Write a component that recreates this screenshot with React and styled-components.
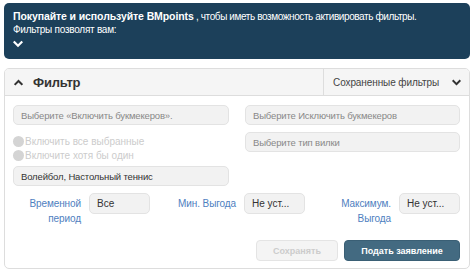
import React from 'react'
import styled, { createGlobalStyle } from 'styled-components'

const GlobalStyle = createGlobalStyle`
  body {
    margin: 0;
    background: #fff;
    font-family: "Liberation Sans", Arial, sans-serif;
    color: #333;
  }
`;

const Chevron = ({ up, size = 9, color = '#333' }) => (
  <svg width={size} height={size} viewBox="0 0 10 10">
    <path
      d={up ? 'M1.5 6.8 L5 3.3 L8.5 6.8' : 'M1.5 3.3 L5 6.8 L8.5 3.3'}
      fill="none"
      stroke={color}
      strokeWidth="2.2"
      strokeLinecap="square"
    />
  </svg>
)

const App = () => {
  return (
    <Page>
      <GlobalStyle />
      <Banner>
        <BannerLine>
          <b>Покупайте и используйте BMpoints</b>
          <Tight> , чтобы иметь возможность активировать фильтры.</Tight>
        </BannerLine>
        <BannerLine>Фильтры позволят вам:</BannerLine>
        <BannerToggle><Chevron size={10} color="#fff" /></BannerToggle>
      </Banner>

      <Panel>
        <Header>
          <HeaderTitle>
            <Chevron up size={9} />
            <span>Фильтр</span>
          </HeaderTitle>
          <SavedFilters>
            <span>Сохраненные фильтры</span>
            <Chevron size={9} />
          </SavedFilters>
        </Header>

        <Body>
          <Columns>
            <Column>
              <Field>Выберите «Включить букмекеров».</Field>
              <Radios>
                <Radio><Dot />Включить все выбранные</Radio>
                <Radio><Dot />Включите хотя бы один</Radio>
              </Radios>
              <Field filled>Волейбол, Настольный теннис</Field>
            </Column>
            <Column>
              <Field>Выберите Исключить букмекеров</Field>
              <Field>Выберите тип вилки</Field>
            </Column>
          </Columns>

          <Params>
            <Param>
              <ParamLabel>Временной период</ParamLabel>
              <SmallField>Все</SmallField>
            </Param>
            <Param>
              <ParamLabel>Мин. Выгода</ParamLabel>
              <SmallField>Не уст...</SmallField>
            </Param>
            <Param>
              <ParamLabel>Максимум. Выгода</ParamLabel>
              <SmallField>Не уст...</SmallField>
            </Param>
          </Params>

          <Actions>
            <Button disabled>Сохранять</Button>
            <Button primary>Подать заявление</Button>
          </Actions>
        </Body>
      </Panel>
    </Page>
  )
}

export default App;

const Page = styled.div`
  width: 466px;
  padding: 3px 4px;
  display: flex;
  flex-direction: column;
  gap: 9px;
`;

const Banner = styled.div`
  background: #1c405a;
  border-radius: 5px;
  color: #fff;
  font-size: 10px;
  letter-spacing: -0.25px;
  padding: 7px 9px 6px;
  height: 43px;
`;

const BannerLine = styled.div`
  line-height: 13px;
  white-space: nowrap;
  b {
    font-weight: 700;
    font-size: 10.5px;
    letter-spacing: -0.1px;
  }
`;

const Tight = styled.span`
  font-size: 10px;
  letter-spacing: -0.4px;
`;

const BannerToggle = styled.div`
  height: 15px;
  display: flex;
  align-items: center;
`;

const Panel = styled.div`
  border: 1px solid #ddd;
  border-radius: 5px;
  overflow: hidden;
`;

const Header = styled.div`
  height: 26px;
  background: #f5f5f5;
  border-bottom: 1px solid #ddd;
  display: flex;
  align-items: stretch;
  justify-content: space-between;
`;

const HeaderTitle = styled.div`
  display: flex;
  align-items: center;
  gap: 10px;
  padding-left: 9px;
  font-size: 13px;
  letter-spacing: -0.2px;
  font-weight: 700;
  color: #333;
`;

const SavedFilters = styled.div`
  flex: 0 0 146px;
  box-sizing: border-box;
  border-left: 1px solid #ddd;
  display: flex;
  align-items: center;
  justify-content: flex-end;
  gap: 13px;
  padding-right: 8px;
  font-size: 10px;
  letter-spacing: -0.1px;
  color: #444;
`;

const Body = styled.div`
  padding: 9px 9px 7px 8px;
  display: flex;
  flex-direction: column;
`;

const Columns = styled.div`
  display: grid;
  grid-template-columns: 216px 1fr;
  column-gap: 16px;
`;

const Column = styled.div`
  display: flex;
  flex-direction: column;
  gap: 7px;
`;

const Field = styled.div`
  height: 20px;
  box-sizing: border-box;
  background: #f2f2f2;
  border: 1px solid #e3e3e3;
  border-radius: 5px;
  padding: 0 7px;
  display: flex;
  align-items: center;
  font-size: 9.5px;
  letter-spacing: -0.15px;
  color: ${p => (p.filled ? '#333' : '#888')};
  white-space: nowrap;
  overflow: hidden;
`;

const Radios = styled.div`
  display: flex;
  flex-direction: column;
  margin-top: 2px;
  margin-bottom: -3px;
`;

const Radio = styled.div`
  display: flex;
  align-items: center;
  height: 14px;
  font-size: 10px;
  color: #ccc;
`;

const Dot = styled.span`
  width: 11px;
  height: 11px;
  border-radius: 50%;
  background: #d4d4d4;
  margin-right: 1px;
`;

const Params = styled.div`
  margin-top: 7px;
  display: grid;
  grid-template-columns: repeat(3, 137px);
  column-gap: 18px;
`;

const Param = styled.div`
  display: grid;
  grid-template-columns: 1fr 61px;
  column-gap: 8px;
  align-items: start;
`;

const ParamLabel = styled.div`
  text-align: right;
  font-size: 10px;
  letter-spacing: -0.1px;
  line-height: 15px;
  color: #4f80c0;
  padding-top: 3px;
`;

const SmallField = styled(Field)`
  height: 21px;
  align-items: flex-start;
  padding-top: 4px;
  font-size: 10px;
  letter-spacing: 0;
  color: #333;
`;

const Actions = styled.div`
  margin-top: 14px;
  display: flex;
  justify-content: flex-end;
  gap: 6px;
`;

const Button = styled.button`
  height: 21px;
  border-radius: 4px;
  font-family: inherit;
  font-size: 9px;
  font-weight: 700;
  padding: 0;
  width: ${p => (p.primary ? '116px' : '82px')};
  background: ${p => (p.primary ? '#436a81' : '#f4f4f4')};
  color: ${p => (p.primary ? '#fff' : '#ccc')};
  border: 1px solid ${p => (p.primary ? '#3a5f75' : '#e4e4e4')};
`;
